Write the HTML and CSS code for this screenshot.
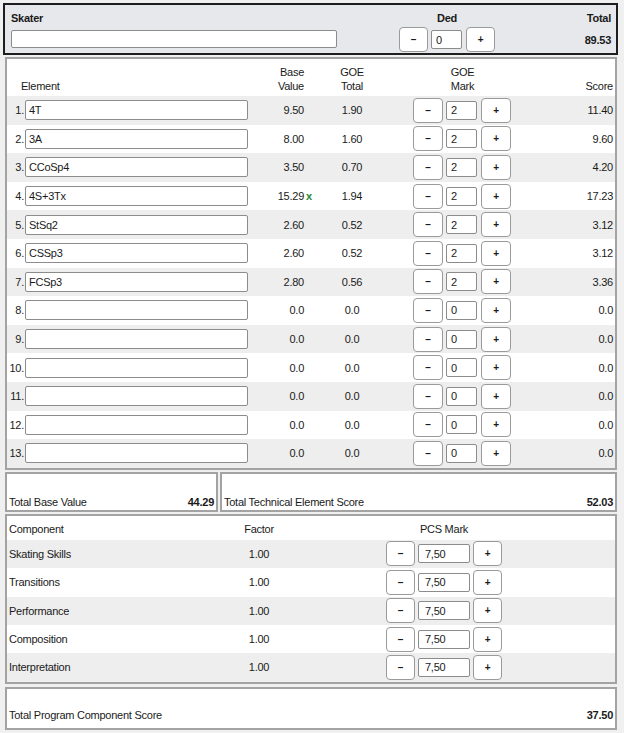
FILE: index.html
```html
<!DOCTYPE html>
<html lang="en">
<head>
    <meta charset="UTF-8">
    <meta name="viewport" content="width=device-width, initial-scale=1.0">
    <title>Score Calculator</title>
    <link rel="stylesheet" href="styles.css">
</head>
<body>
<div class="page">
    <div class="head">
        <div class="skater">
            <div class="lbl b">Skater</div>
            <input class="name-input" type="text">
        </div>
        <div class="ded">
            <div class="lbl b">Ded</div>
            <div class="stepper">
                <button class="step">&ndash;</button><input class="mark" value="0"><button class="step">+</button>
            </div>
        </div>
        <div class="total">
            <div class="lbl b">Total</div>
            <div class="b total-val">89.53</div>
        </div>
    </div>

    <div class="panel elements">
        <div class="el-row el-head">
            <div></div>
            <div class="el-title">Element</div>
            <div class="r">Base<br>Value</div>
            <div class="c">GOE<br>Total</div>
            <div class="c mark-head">GOE<br>Mark</div>
            <div class="r">Score</div>
        </div>
        <div class="el-row">
            <div class="num">1.</div><input class="el-input" value="4T">
            <div class="r">9.50</div><div class="c">1.90</div>
            <div class="stepper goe"><button class="step">&ndash;</button><input class="mark" value="2"><button class="step">+</button></div>
            <div class="r">11.40</div>
        </div>
        <div class="el-row">
            <div class="num">2.</div><input class="el-input" value="3A">
            <div class="r">8.00</div><div class="c">1.60</div>
            <div class="stepper goe"><button class="step">&ndash;</button><input class="mark" value="2"><button class="step">+</button></div>
            <div class="r">9.60</div>
        </div>
        <div class="el-row">
            <div class="num">3.</div><input class="el-input" value="CCoSp4">
            <div class="r">3.50</div><div class="c">0.70</div>
            <div class="stepper goe"><button class="step">&ndash;</button><input class="mark" value="2"><button class="step">+</button></div>
            <div class="r">4.20</div>
        </div>
        <div class="el-row">
            <div class="num">4.</div><input class="el-input" value="4S+3Tx">
            <div class="r base-x">15.29<span class="bonus">x</span></div><div class="c">1.94</div>
            <div class="stepper goe"><button class="step">&ndash;</button><input class="mark" value="2"><button class="step">+</button></div>
            <div class="r">17.23</div>
        </div>
        <div class="el-row">
            <div class="num">5.</div><input class="el-input" value="StSq2">
            <div class="r">2.60</div><div class="c">0.52</div>
            <div class="stepper goe"><button class="step">&ndash;</button><input class="mark" value="2"><button class="step">+</button></div>
            <div class="r">3.12</div>
        </div>
        <div class="el-row">
            <div class="num">6.</div><input class="el-input" value="CSSp3">
            <div class="r">2.60</div><div class="c">0.52</div>
            <div class="stepper goe"><button class="step">&ndash;</button><input class="mark" value="2"><button class="step">+</button></div>
            <div class="r">3.12</div>
        </div>
        <div class="el-row">
            <div class="num">7.</div><input class="el-input" value="FCSp3">
            <div class="r">2.80</div><div class="c">0.56</div>
            <div class="stepper goe"><button class="step">&ndash;</button><input class="mark" value="2"><button class="step">+</button></div>
            <div class="r">3.36</div>
        </div>
        <div class="el-row">
            <div class="num">8.</div><input class="el-input" value="">
            <div class="r">0.0</div><div class="c">0.0</div>
            <div class="stepper goe"><button class="step">&ndash;</button><input class="mark" value="0"><button class="step">+</button></div>
            <div class="r">0.0</div>
        </div>
        <div class="el-row">
            <div class="num">9.</div><input class="el-input" value="">
            <div class="r">0.0</div><div class="c">0.0</div>
            <div class="stepper goe"><button class="step">&ndash;</button><input class="mark" value="0"><button class="step">+</button></div>
            <div class="r">0.0</div>
        </div>
        <div class="el-row">
            <div class="num">10.</div><input class="el-input" value="">
            <div class="r">0.0</div><div class="c">0.0</div>
            <div class="stepper goe"><button class="step">&ndash;</button><input class="mark" value="0"><button class="step">+</button></div>
            <div class="r">0.0</div>
        </div>
        <div class="el-row">
            <div class="num">11.</div><input class="el-input" value="">
            <div class="r">0.0</div><div class="c">0.0</div>
            <div class="stepper goe"><button class="step">&ndash;</button><input class="mark" value="0"><button class="step">+</button></div>
            <div class="r">0.0</div>
        </div>
        <div class="el-row">
            <div class="num">12.</div><input class="el-input" value="">
            <div class="r">0.0</div><div class="c">0.0</div>
            <div class="stepper goe"><button class="step">&ndash;</button><input class="mark" value="0"><button class="step">+</button></div>
            <div class="r">0.0</div>
        </div>
        <div class="el-row">
            <div class="num">13.</div><input class="el-input" value="">
            <div class="r">0.0</div><div class="c">0.0</div>
            <div class="stepper goe"><button class="step">&ndash;</button><input class="mark" value="0"><button class="step">+</button></div>
            <div class="r">0.0</div>
        </div>
    </div>

    <div class="totals">
        <div class="box box-base"><span>Total Base Value</span><span class="b">44.29</span></div>
        <div class="box box-tes"><span>Total Technical Element Score</span><span class="b">52.03</span></div>
    </div>

    <div class="panel comps">
        <div class="pc-row pc-head">
            <div>Component</div>
            <div class="c">Factor</div>
            <div></div>
            <div class="c">PCS Mark</div>
        </div>
        <div class="pc-row">
            <div>Skating Skills</div><div class="c">1.00</div><div></div>
            <div class="stepper pcs"><button class="step">&ndash;</button><input class="mark" value="7,50"><button class="step">+</button></div>
        </div>
        <div class="pc-row">
            <div>Transitions</div><div class="c">1.00</div><div></div>
            <div class="stepper pcs"><button class="step">&ndash;</button><input class="mark" value="7,50"><button class="step">+</button></div>
        </div>
        <div class="pc-row">
            <div>Performance</div><div class="c">1.00</div><div></div>
            <div class="stepper pcs"><button class="step">&ndash;</button><input class="mark" value="7,50"><button class="step">+</button></div>
        </div>
        <div class="pc-row">
            <div>Composition</div><div class="c">1.00</div><div></div>
            <div class="stepper pcs"><button class="step">&ndash;</button><input class="mark" value="7,50"><button class="step">+</button></div>
        </div>
        <div class="pc-row">
            <div>Interpretation</div><div class="c">1.00</div><div></div>
            <div class="stepper pcs"><button class="step">&ndash;</button><input class="mark" value="7,50"><button class="step">+</button></div>
        </div>
    </div>

    <div class="box box-pcs"><span>Total Program Component Score</span><span class="b">37.50</span></div>
</div>
</body>
</html>
```

FILE: styles.css
```css
body {
    margin: 0;
    background-color: #f0f0f0;
    font-family: "Liberation Sans", Arial, sans-serif;
    font-size: 11px;
    letter-spacing: -0.25px;
    color: #1a1a1a;
}
.page {
    padding: 3px 6px 0 3px;
}
.b {
    font-weight: bold;
}
.r {
    text-align: right;
}
.c {
    text-align: center;
}
input, button {
    font-family: inherit;
    font-size: 11px;
    letter-spacing: -0.25px;
    color: #1a1a1a;
    box-sizing: border-box;
    margin: 0;
}

/* header */
.head {
    display: flex;
    height: 52px;
    box-sizing: border-box;
    border: 2px solid #1e1e1e;
    background-color: #e6e8eb;
    padding: 7px 5px 0 6px;
}
.lbl {
    line-height: 13px;
}
.skater {
    width: 326px;
}
.name-input {
    display: block;
    width: 326px;
    height: 18px;
    margin-top: 5px;
    border: 1px solid #8c8c8c;
    border-radius: 2px;
    background: white;
}
.ded {
    margin-left: 62px;
    width: 96px;
    text-align: center;
}
.ded .stepper {
    margin-top: 2px;
}
.total {
    flex: 1;
    text-align: right;
}
.total-val {
    margin-top: 9px;
    line-height: 13px;
}

/* steppers */
.stepper {
    display: flex;
    align-items: center;
    gap: 3px;
}
.step {
    width: 30px;
    height: 25px;
    background: white;
    border: 1px solid #9a9a9a;
    border-radius: 4px;
    padding: 0;
    font-weight: bold;
    font-size: 10px;
}
.mark {
    width: 31px;
    height: 19px;
    border: 1px solid #8c8c8c;
    border-radius: 2px;
    padding: 0 4px;
    background: white;
}
.ded .step:last-child,
.goe .step:last-child {
    margin-left: 1px;
}
.pcs .mark {
    width: 52px;
    padding-left: 6px;
}
.pcs .step {
    width: 29px;
}

/* panels */
.panel {
    margin: 2px 1px 0 2px;
    border: 2px solid #a3a3a3;
    background: white;
}
.el-row {
    display: grid;
    grid-template-columns: 18px 223px 56px 96px 112px 1fr;
    align-items: center;
    height: 28.6px;
    padding-right: 2px;
}
.el-row:nth-child(even) {
    background-color: #eeeeee;
}
.el-head {
    height: 37px;
    align-items: end;
    padding-bottom: 3px;
    box-sizing: border-box;
    line-height: 14px;
}
.el-title {
    margin-left: -4px;
}
.mark-head {
    padding-left: 13px;
}
.num {
    text-align: right;
    padding-right: 1px;
}
.el-input {
    width: 223px;
    height: 20px;
    border: 1px solid #8c8c8c;
    border-radius: 2px;
    padding: 0 3px;
    background: white;
}
.goe {
    padding-left: 13px;
}
.base-x {
    position: relative;
}
.bonus {
    position: absolute;
    left: 100%;
    margin-left: 2px;
    color: #1e8a2e;
    font-weight: bold;
}

/* totals */
.totals {
    display: flex;
    gap: 2px;
    margin: 2px 1px 0 2px;
}
.box {
    display: flex;
    align-items: flex-end;
    justify-content: space-between;
    box-sizing: border-box;
    height: 40px;
    border: 2px solid #a3a3a3;
    background: white;
    padding: 0 2px 1px 2px;
    line-height: 13px;
}
.box-base {
    width: 213px;
}
.box-tes {
    flex: 1;
}
.box-pcs {
    margin: 3px 1px 0 2px;
    height: 43px;
    padding-bottom: 6px;
}

/* components */
.comps {
    margin-top: 2px;
}
.pc-row {
    display: grid;
    grid-template-columns: 202px 96px 79px 116px 1fr;
    align-items: center;
    height: 28.4px;
    padding-left: 2px;
}
.pc-row:nth-child(even) {
    background-color: #eeeeee;
}
.pc-head {
    height: 22px;
    padding-top: 2px;
}
```
